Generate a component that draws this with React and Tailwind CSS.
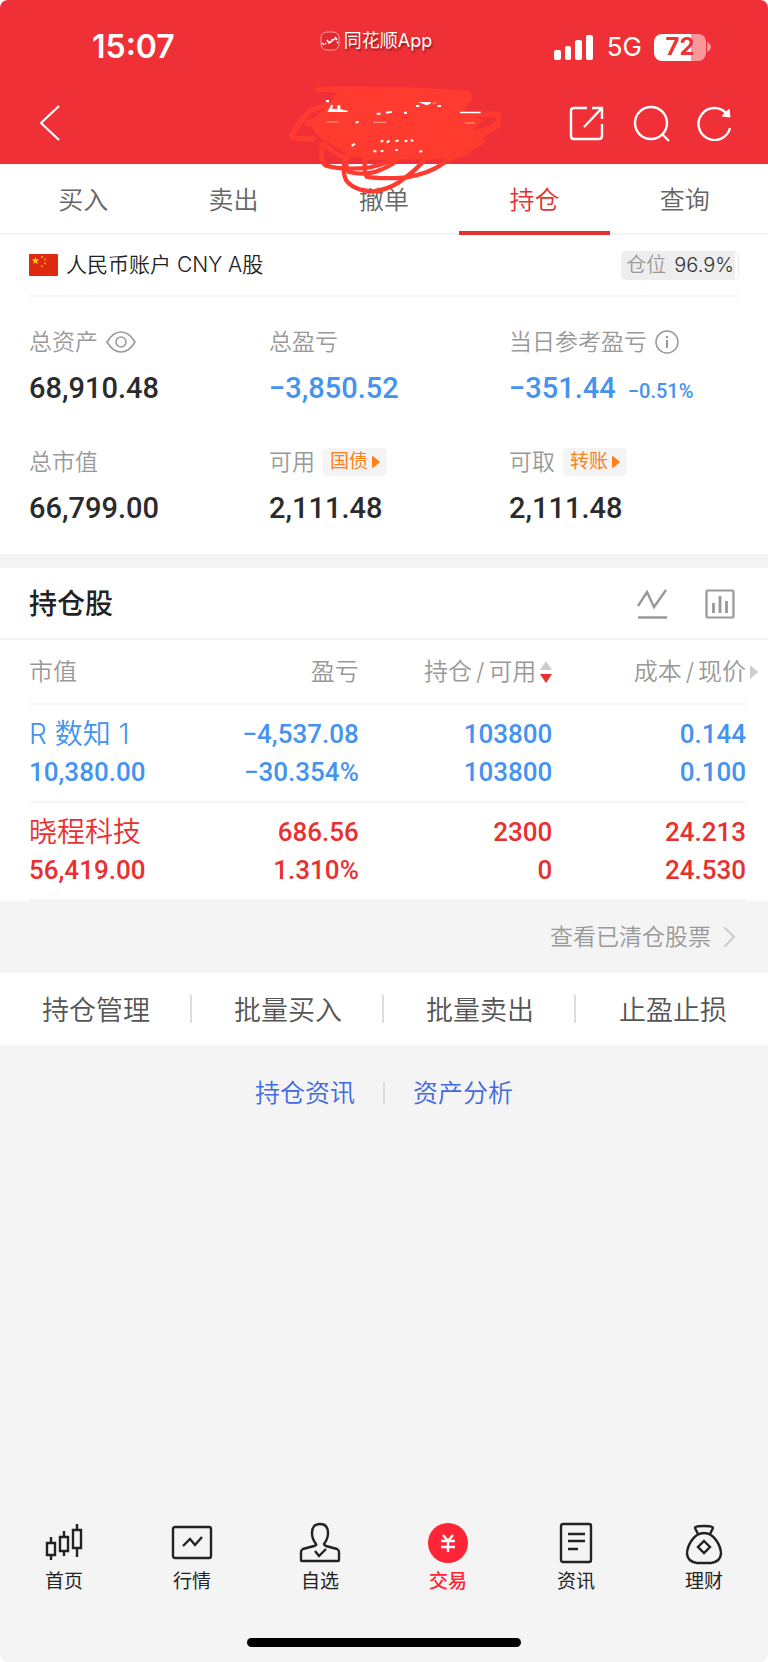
import React, { useState } from "react";

const TABS = ["买入", "卖出", "撤单", "持仓", "查询"];

const HOLDINGS = [
  {
    name: "R 数知 1",
    value: "10,380.00",
    profit: "−4,537.08",
    profitRate: "−30.354%",
    amount: "103800",
    available: "103800",
    cost: "0.144",
    price: "0.100",
    color: "text-[#4592ef]",
  },
  {
    name: "晓程科技",
    value: "56,419.00",
    profit: "686.56",
    profitRate: "1.310%",
    amount: "2300",
    available: "0",
    cost: "24.213",
    price: "24.530",
    color: "text-[#e93030]",
  },
];

const ACTIONS = ["持仓管理", "批量买入", "批量卖出", "止盈止损"];

const StatusBar = () => (
  <div className="grid h-[82px] grid-cols-3 items-center pt-3">
    <div className="pl-[92px] text-[32px] leading-10 font-semibold">15:07</div>
    <div className="flex items-center justify-center gap-1 pr-4 pb-3 text-[18px] leading-6 whitespace-nowrap [text-shadow:1px_2px_2px_rgba(90,0,0,0.6)]">
      <svg className="h-5 w-5" viewBox="0 0 20 20" fill="none" stroke="#fff">
        <rect x="1" y="1" width="18" height="18" rx="6" fill="#e02a30" stroke="#ff9c9c" />
        <path d="M2 12l2 2M5 13l1-1M7 9l2 3 3-2v-2M13 9l2-1M15 6l2 3M17 11l1 1" strokeWidth="1.6" />
      </svg>
      <span>同花顺App</span>
    </div>
    <div className="flex items-center justify-end pr-[57px]">
      <svg className="h-[25px] w-[39px]" viewBox="0 0 39 25" fill="#fff">
        <rect x="0" y="15" width="7" height="10" rx="2" />
        <rect x="11" y="11" width="6" height="14" rx="2" />
        <rect x="21" y="5" width="7" height="20" rx="2" />
        <rect x="32" y="0" width="7" height="25" rx="2" />
      </svg>
      <span className="ml-3.5 text-[26px] leading-8">5G</span>
      <div className="ml-3 flex h-[27px] w-[52px] items-center justify-center rounded-[8px] bg-linear-to-r from-white from-72% to-[#f8979a] to-72% text-[24px] leading-none font-bold text-[#ef3038]">
        72
      </div>
      <svg className="ml-px h-[10px] w-[4px]" viewBox="0 0 4 10" fill="#f8979a">
        <path d="M0 0Q4 2 4 5T0 10z" />
      </svg>
    </div>
  </div>
);

const Scribble = () => (
  <svg
    className="pointer-events-none absolute top-[70px] left-1/2 z-10 h-[140px] w-[260px] -translate-x-1/2"
    viewBox="-48 0 780 420"
    fill="none"
    stroke="#ff3b30"
    strokeLinecap="round"
    strokeLinejoin="round"
  >
    <path
      d="M145 58Q400 54 595 70L590 110 575 128 640 150 600 190 640 215 585 250 520 262 240 262 215 240 150 205 130 180 118 160 180 100 200 70z"
      fill="#ff3b30"
      stroke="none"
    />
    <g strokeWidth="16">
      <path d="M145 58Q400 54 595 70Q604 88 585 102" />
      <path d="M175 105Q115 118 105 140Q75 170 65 200Q70 208 130 206" />
      <path d="M190 128L112 160 180 172M600 135Q660 130 685 135Q690 150 680 165L630 200" />
      <path d="M520 220Q620 185 684 168M540 232L636 216 560 258 300 262" />
    </g>
    <g strokeWidth="13">
      <path d="M157 222Q150 275 166 286Q220 302 300 292Q350 280 385 262" />
      <path d="M162 222Q190 250 220 262M232 262Q224 290 236 306Q290 318 330 300Q370 285 390 262" />
      <path d="M225 262Q216 305 228 330Q250 362 310 364Q350 360 385 338Q440 300 470 262" />
      <path d="M286 262Q280 300 290 320Q330 328 410 322Q480 310 520 280Q550 258 590 250" />
    </g>
    <g fill="#fff" stroke="none">
      <path d="M168 90h9v7h-9zM172 126L184 104 190 106 186 116 202 117V106H211V118L233 122V126z" />
      <path d="M445 96H482V101L470 106 458 101zM570 125H632V130H570z" />
    </g>
    <g stroke="#fff" strokeLinecap="butt">
      <path
        d="M320 131h12M348 128l18-3M402 128h9M438 108h10M503 108h10M257 158l9-3M245 228l10-7M332 215l8-3M350 218l8-6M376 214l10-3M404 214l8-2M422 211l8 1M310 244h9M332 245l8-3M376 240h8M448 245l9-2"
        strokeWidth="6"
      />
      <path d="M170 156h36M310 157h38M585 159h30M488 101l12-4" strokeWidth="3" opacity="0.5" />
    </g>
  </svg>
);

const NavBar = () => (
  <div className="flex h-[82px] items-center justify-between pr-9 pl-10">
    <button type="button" aria-label="返回">
      <svg className="h-9 w-5" viewBox="0 0 20 36" fill="none" stroke="#fff" strokeWidth="2.2">
        <path d="M19 1L1 18l18 17" />
      </svg>
    </button>
    <div className="flex items-center gap-7">
      <button type="button" aria-label="分享">
        <svg className="h-9 w-9" viewBox="0 0 36 36" fill="none" stroke="#fff" strokeWidth="2.4">
          <path d="M19 3H6Q3 3 3 6v25q0 3 3 3h25q3 0 3-3V19M24 3h10v11M34 3L16 22" />
        </svg>
      </button>
      <button type="button" aria-label="搜索">
        <svg className="h-9 w-9 overflow-visible" viewBox="0 0 36 36" fill="none" stroke="#fff" strokeWidth="2.4">
          <circle cx="19" cy="18" r="16" />
          <path d="M30 29l7 7" />
        </svg>
      </button>
      <button type="button" aria-label="刷新">
        <svg className="h-9 w-9" viewBox="0 0 36 36" fill="none" stroke="#fff" strokeWidth="2.4">
          <path d="M34 23A16 16 0 1 1 31 9" />
          <path d="M33 4l1 8-8-1z" fill="#fff" stroke="#fff" strokeWidth="1" />
        </svg>
      </button>
    </div>
  </div>
);

const Metric = ({ label, extra, value, children }) => (
  <div>
    <div className="flex h-8 items-center gap-2 text-[23px] leading-8 font-[350] text-[#999]">
      <span>{label}</span>
      {extra}
    </div>
    <div className="mt-3 flex h-9 items-baseline gap-3 font-[Roboto,sans-serif] text-[29px] leading-9 font-medium">
      {value}
      {children}
    </div>
  </div>
);

const Tag = ({ children }) => (
  <button
    type="button"
    className="flex h-7 items-center gap-1 rounded-[4px] bg-[#f4f4f4] px-[7px] text-[19px] leading-7 font-normal text-[#ff801a]"
  >
    {children}
    <svg className="h-3 w-2" viewBox="0 0 8 12" fill="#ff801a">
      <path d="M0 1Q0 0 1 0L8 6 1 12Q0 12 0 11z" />
    </svg>
  </button>
);

const AccountSummary = () => (
  <section className="bg-white pb-[28px]">
    <div className="mx-[29px] flex h-[62px] items-center justify-between border-b-2 border-[#f6f6f6]">
      <div className="flex items-center gap-2 text-[21px] leading-8 font-[350] text-[#222]">
        <svg className="h-[22px] w-[29px]" viewBox="0 0 29 22">
          <rect width="29" height="22" rx="1" fill="#de2910" />
          <path d="M6.5 3l1 2.500h2.700L8 7.200l.8 2.700-2.300-1.700-2.300 1.700.8-2.700L2.800 5.500h2.700z" fill="#ffde00" />
          <g fill="#ffb000">
            <circle cx="13" cy="3" r="1" />
            <circle cx="16" cy="5.500" r="1" />
            <circle cx="16" cy="9.500" r="1" />
            <circle cx="13" cy="12" r="1" />
          </g>
        </svg>
        <h1>人民币账户 CNY A股</h1>
      </div>
      <div className="flex h-[29px] items-center gap-2 rounded-[4px] border border-[#eee] bg-linear-to-r from-[#eee] from-97% to-white to-97% px-1 text-[20px] leading-7 font-[350] text-[#999]">
        仓位 <span className="text-[#333]">96.9%</span>
      </div>
    </div>
    <div className="grid grid-cols-3 gap-y-10 pt-[29px] pr-[19px] pl-[29px] text-[#2b2b2b]">
      <Metric
        label="总资产"
        value="68,910.48"
        extra={
          <button type="button" aria-label="隐藏资产">
            <svg className="h-[22px] w-[30px]" viewBox="0 0 30 22" fill="none" stroke="#999" strokeWidth="1.6">
              <path d="M1 11Q7 1 15 1t14 10Q23 21 15 21T1 11z" />
              <circle cx="15" cy="11" r="5" />
            </svg>
          </button>
        }
      />
      <Metric label="总盈亏" value={<span className="text-[#4592ef]">−3,850.52</span>} />
      <Metric
        label="当日参考盈亏"
        value={<span className="text-[#4592ef]">−351.44</span>}
        extra={
          <button type="button" aria-label="说明">
            <svg className="h-6 w-6" viewBox="0 0 24 24" fill="none" stroke="#999" strokeWidth="1.5">
              <circle cx="12" cy="12" r="11" />
              <path d="M12 10v8" strokeWidth="2" />
              <circle cx="12" cy="7" r="1.3" fill="#999" stroke="none" />
            </svg>
          </button>
        }
      >
        <span className="text-[20px] text-[#4592ef]">−0.51%</span>
      </Metric>
      <Metric label="总市值" value="66,799.00" />
      <Metric label="可用" value="2,111.48" extra={<Tag>国债</Tag>} />
      <Metric label="可取" value="2,111.48" extra={<Tag>转账</Tag>} />
    </div>
  </section>
);

const Cell = ({ top, bottom }) => (
  <td className="p-0 text-right font-[Roboto,sans-serif] text-[26px] leading-[38px] font-medium">
    <div>{top}</div>
    <div>{bottom}</div>
  </td>
);

const Holdings = () => (
  <section className="mt-[14px] bg-white">
    <div className="flex h-[72px] items-center justify-between border-b-2 border-[#f4f4f4] pt-0.5 pr-[33px] pl-[29px]">
      <h2 className="text-[28px] leading-10 font-medium text-[#222]">持仓股</h2>
      <div className="flex gap-[38px]">
        <button type="button" aria-label="走势">
          <svg className="h-[30px] w-[30px]" viewBox="0 0 30 30" fill="none" stroke="#999" strokeWidth="2.4">
            <path d="M1 17L10 3l7 15L29 1M1 28.500h29" />
          </svg>
        </button>
        <button type="button" aria-label="统计">
          <svg className="h-[30px] w-[30px]" viewBox="0 0 30 30" fill="none" stroke="#999" strokeWidth="2.2">
            <rect x="1.5" y="1.5" width="27" height="27" rx="1" />
            <path d="M8.500 14v10M15 7v17M21.500 12v12" strokeWidth="2.8" />
          </svg>
        </button>
      </div>
    </div>
    <div className="pr-[22px] pl-[29px]">
      <table className="w-full table-fixed border-collapse">
        <colgroup>
          <col className="w-[19%]" />
          <col className="w-[27%]" />
          <col className="w-[27%]" />
          <col className="w-[27%]" />
        </colgroup>
        <thead>
          <tr className="h-[64px] border-b-2 border-[#f6f6f6] text-[24px] leading-8 text-[#999]">
            <th className="p-0 text-left font-[350]">市值</th>
            <th className="p-0 text-right font-[350]">盈亏</th>
            <th className="p-0 font-[350]">
              <div className="flex items-center justify-end gap-1">
                <span className="flex gap-1">
                  <span>持仓</span>/<span>可用</span>
                </span>
                <svg className="h-6 w-3" viewBox="0 0 12 24">
                  <path d="M0 10L6 1l6 9z" fill="#ccc" />
                  <path d="M0 14h12l-6 9z" fill="#e93030" />
                </svg>
              </div>
            </th>
            <th className="relative p-0 font-[350]">
              <div className="flex justify-end gap-1">
                <span>成本</span>/<span>现价</span>
              </div>
              <svg className="absolute top-1/2 -right-3 h-[14px] w-2 -translate-y-1/2" viewBox="0 0 8 14">
                <path d="M0 0l8 7-8 7z" fill="#ccc" />
              </svg>
            </th>
          </tr>
        </thead>
        <tbody>
          {HOLDINGS.map((item) => (
            <tr key={item.name} className={`h-[98px] border-b-2 border-[#f6f6f6] ${item.color}`}>
              <td className="p-0 whitespace-nowrap">
                <div className="text-[28px] leading-[38px] font-[350]">{item.name}</div>
                <div className="font-[Roboto,sans-serif] text-[26px] leading-[38px] font-medium">{item.value}</div>
              </td>
              <Cell top={item.profit} bottom={item.profitRate} />
              <Cell top={item.amount} bottom={item.available} />
              <Cell top={item.cost} bottom={item.price} />
            </tr>
          ))}
        </tbody>
      </table>
    </div>
  </section>
);

const NAV_ITEMS = [
  {
    label: "首页",
    icon: (
      <path d="M7 14v6M7 33v4M3 20h8v12H3zM20 8v6M20 28v5M16 14h8v14h-8zM33 1v6M33 25v9M29 7h8v18h-8z" />
    ),
  },
  {
    label: "行情",
    icon: (
      <>
        <rect x="1" y="4" width="38" height="31" rx="2" />
        <path d="M11 23l7-7 5 6 7-8" />
      </>
    ),
  },
  {
    label: "自选",
    icon: (
      <>
        <path d="M16 21Q12 16 12 10Q12 1 20 1t8 9Q28 16 24 21Q24 22 26 23L37 26Q39 27 39 29v8q0 1-1 1H2q-1 0-1-1v-8q0-2 2-3l11-3q3-1 2-2z" />
        <path d="M15 28l4 5 7-7" />
      </>
    ),
  },
  {
    label: "交易",
    active: true,
    icon: (
      <>
        <circle cx="20" cy="20" r="20" fill="#ff2436" stroke="none" />
        <path d="M15 12l5 6 5-6M20 18v11M13 18h14M13 24h14" stroke="#fff" strokeWidth="2.4" />
      </>
    ),
  },
  {
    label: "资讯",
    icon: (
      <>
        <rect x="5" y="1" width="30" height="38" rx="2" />
        <path d="M12 11h17M12 18h17M12 26h10" />
      </>
    ),
  },
  {
    label: "理财",
    icon: (
      <>
        <path d="M14 11L11 5Q11 3 20 3t9 2L26 11" />
        <path d="M20 10Q27 10 32 17Q37 24 37 31Q36 39 27 40H13Q4 39 3 31Q3 24 8 17Q13 10 20 10z" />
        <path d="M20 18l6 6-6 6-6-6z" />
      </>
    ),
  },
];

const BottomNav = () => (
  <nav className="mt-auto">
    <div className="grid grid-cols-6">
      {NAV_ITEMS.map(({ label, icon, active }) => (
        <a
          key={label}
          href="#"
          className={`flex flex-col items-center gap-[3px] text-[19px] leading-8 ${
            active ? "font-medium text-[#ff2436]" : "text-[#222]"
          }`}
        >
          <svg className="h-10 w-10 overflow-visible" viewBox="0 0 40 40" fill="none" stroke="#222" strokeWidth="2.4">
            {icon}
          </svg>
          {label}
        </a>
      ))}
    </div>
    <div className="mx-auto mt-10 mb-[15px] h-[9px] w-[274px] rounded-full bg-black" />
  </nav>
);

export default function App() {
  const [activeTab, setActiveTab] = useState("持仓");

  return (
    <div className="bg-white font-[Inter,'Noto_Sans_CJK_SC',sans-serif]">
      <div className="relative flex min-h-screen flex-col overflow-hidden rounded-[8px] bg-[#f4f4f4]">
        <header className="bg-[#f03037] text-white">
          <StatusBar />
          <NavBar />
        </header>
        <Scribble />

        <div className="flex h-[71px] border-b-2 border-[#f4f4f4] bg-white px-2">
          {TABS.map((tab) => (
            <button
              key={tab}
              type="button"
              onClick={() => setActiveTab(tab)}
              className={`-mb-0.5 flex-1 border-b-4 pt-1 text-[25px] leading-8 font-[350] ${
                tab === activeTab ? "border-[#e93030] text-[#e93030]" : "border-transparent text-[#666]"
              }`}
            >
              {tab}
            </button>
          ))}
        </div>

        <AccountSummary />
        <Holdings />

        <div className="flex h-[72px] items-center justify-end pr-[33px]">
          <a href="#" className="flex items-center gap-3 text-[23px] leading-8 font-[350] text-[#999]">
            查看已清仓股票
            <svg className="h-5 w-3" viewBox="0 0 12 20" fill="none" stroke="#ccc" strokeWidth="2">
              <path d="M1 0l10 10L1 20" />
            </svg>
          </a>
        </div>

        <div className="grid h-[72px] grid-cols-4 items-center divide-x-2 divide-[#ddd] bg-white">
          {ACTIONS.map((action) => (
            <button key={action} type="button" className="h-7 pt-0.5 pl-0.5 text-[27px] leading-7 font-[350] text-[#555]">
              {action}
            </button>
          ))}
        </div>

        <div className="mt-8 flex items-center justify-center gap-7 text-[25px] leading-8 font-[350] text-[#4169e1]">
          <a href="#">持仓资讯</a>
          <span className="h-[22px] w-[2px] bg-[#ddd]" />
          <a href="#">资产分析</a>
        </div>

        <BottomNav />
      </div>
    </div>
  );
}
